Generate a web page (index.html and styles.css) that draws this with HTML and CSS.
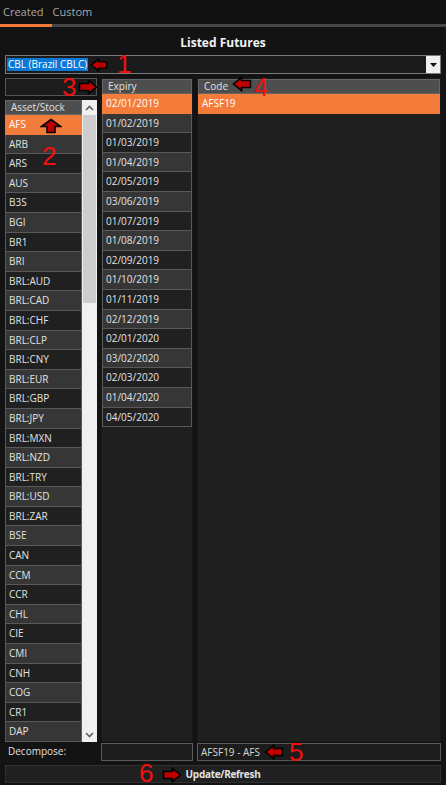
FILE: index.html
```html
<!DOCTYPE html>
<html>
<head>
<meta charset="utf-8">
<link rel="stylesheet" href="styles.css">
</head>
<body>
<div class="tabs"><span class="tab">Created</span><span class="tab">Custom</span></div>
<div class="tabline"><div class="tabline-active"></div></div>
<div class="title">Listed Futures</div>
<div class="combo">
  <span class="combo-text">CBL (Brazil CBLC)</span>
  <span class="combo-btn"><svg width="7" height="4" viewBox="0 0 7 4"><polygon points="0,0 7,0 3.5,4" fill="#111"/></svg></span>
</div>
<div class="grid">
  <div class="col-asset">
    <div class="filter"></div>
    <div class="asset-list">
      <div class="asset-rows">
        <div class="header">Asset/Stock</div>
        <div class="row sel">AFS</div>
        <div class="row light">ARB</div>
        <div class="row">ARS</div>
        <div class="row light">AUS</div>
        <div class="row">B3S</div>
        <div class="row light">BGI</div>
        <div class="row">BR1</div>
        <div class="row light">BRI</div>
        <div class="row">BRL:AUD</div>
        <div class="row light">BRL:CAD</div>
        <div class="row">BRL:CHF</div>
        <div class="row light">BRL:CLP</div>
        <div class="row">BRL:CNY</div>
        <div class="row light">BRL:EUR</div>
        <div class="row">BRL:GBP</div>
        <div class="row light">BRL:JPY</div>
        <div class="row">BRL:MXN</div>
        <div class="row light">BRL:NZD</div>
        <div class="row">BRL:TRY</div>
        <div class="row light">BRL:USD</div>
        <div class="row">BRL:ZAR</div>
        <div class="row light">BSE</div>
        <div class="row">CAN</div>
        <div class="row light">CCM</div>
        <div class="row">CCR</div>
        <div class="row light">CHL</div>
        <div class="row">CIE</div>
        <div class="row light">CMI</div>
        <div class="row">CNH</div>
        <div class="row light">COG</div>
        <div class="row">CR1</div>
        <div class="row light">DAP</div>
      </div>
      <div class="scrollbar">
        <div class="sb-arrow"><svg width="9" height="6" viewBox="0 0 9 6"><polyline points="1,5 4.5,1.5 8,5" fill="none" stroke="#606060" stroke-width="1.6"/></svg></div>
        <div class="sb-thumb"></div>
        <div class="sb-track"></div>
        <div class="sb-arrow"><svg width="9" height="6" viewBox="0 0 9 6"><polyline points="1,1 4.5,4.5 8,1" fill="none" stroke="#606060" stroke-width="1.6"/></svg></div>
      </div>
    </div>
  </div>
  <div class="panel">
    <div class="header">Expiry</div>
    <div class="row sel">02/01/2019</div>
    <div class="row light">01/02/2019</div>
    <div class="row">01/03/2019</div>
    <div class="row light">01/04/2019</div>
    <div class="row">02/05/2019</div>
    <div class="row light">03/06/2019</div>
    <div class="row">01/07/2019</div>
    <div class="row light">01/08/2019</div>
    <div class="row">02/09/2019</div>
    <div class="row light">01/10/2019</div>
    <div class="row">01/11/2019</div>
    <div class="row light">02/12/2019</div>
    <div class="row">02/01/2020</div>
    <div class="row light">03/02/2020</div>
    <div class="row">02/03/2020</div>
    <div class="row light">01/04/2020</div>
    <div class="row">04/05/2020</div>
  </div>
  <div class="panel">
    <div class="header">Code</div>
    <div class="row sel">AFSF19</div>
  </div>
</div>
<div class="bottom">
  <div class="label">Decompose:</div>
  <div class="input"></div>
  <div class="input">AFSF19 - AFS</div>
</div>
<div class="button">Update/Refresh</div>

<!-- annotations -->
<svg class="arrow a1" width="18" height="16" viewBox="0 0 20 16"><polygon points="1.5,8 9.5,1.5 9.5,4.5 18.5,4.5 18.5,11.5 9.5,11.5 9.5,14.5" /></svg>
<span class="num n1">1</span>
<svg class="arrow a2" width="22" height="16" viewBox="0 0 22 16"><polygon points="11,1.5 20.5,8.5 15,8.5 15,14.5 7,14.5 7,8.5 1.5,8.5" /></svg>
<span class="num n2">2</span>
<span class="num n3">3</span>
<svg class="arrow a3" width="20" height="16" viewBox="0 0 20 16"><polygon points="18.5,8 10.5,1.5 10.5,4.5 1.5,4.5 1.5,11.5 10.5,11.5 10.5,14.5" /></svg>
<svg class="arrow a4" width="20" height="16" viewBox="0 0 20 16"><polygon points="1.5,8 9.5,1.5 9.5,4.5 18.5,4.5 18.5,11.5 9.5,11.5 9.5,14.5" /></svg>
<span class="num n4">4</span>
<svg class="arrow a5" width="20" height="16" viewBox="0 0 20 16"><polygon points="1.5,8 9.5,1.5 9.5,4.5 18.5,4.5 18.5,11.5 9.5,11.5 9.5,14.5" /></svg>
<span class="num n5">5</span>
<span class="num n6">6</span>
<svg class="arrow a6" width="20" height="16" viewBox="0 0 20 16"><polygon points="18.5,8 10.5,1.5 10.5,4.5 1.5,4.5 1.5,11.5 10.5,11.5 10.5,14.5" /></svg>
</body>
</html>
```
FILE: styles.css
```css
* { box-sizing: border-box; }
html, body { margin: 0; padding: 0; }
body {
  width: 446px;
  height: 785px;
  background: #131313;
  font-family: "Open Sans", "Noto Sans", sans-serif;
  font-size: 10px;
  color: #e2e2e2;
  position: relative;
  overflow: hidden;
}
.tabs {
  height: 24px;
  display: flex;
  align-items: center;
  gap: 9px;
  padding-left: 3px;
  padding-bottom: 1px;
  font-size: 11px;
  color: #a8a8a8;
  background: #111;
}
.tabline {
  height: 3px;
  background: #474747;
  display: flex;
}
.tabline-active { width: 52px; background: #f37c3a; }
.title {
  height: 28px;
  padding-top: 3px;
  line-height: 25px;
  text-align: center;
  font-weight: bold;
  font-size: 12px;
  color: #f2f2f2;
}
.combo {
  margin: 0 5px;
  height: 19px;
  border: 1px solid #7a7a7a;
  background: #1b1b1b;
  display: flex;
  align-items: center;
  padding-left: 1px;
}
.combo-text {
  background: #0a78d6;
  color: #fff;
  line-height: 13px;
  padding: 0 1px;
}
.combo-btn {
  margin-left: auto;
  width: 14px;
  height: 17px;
  background: #f0f0f0;
  display: flex;
  align-items: center;
  justify-content: center;
}
.grid {
  margin: 4px 5px 0;
  height: 660px;
  display: grid;
  grid-template-columns: 92px 92px 244px;
  column-gap: 4px;
}
.col-asset {
  display: flex;
  flex-direction: column;
  gap: 4px;
}
.filter {
  height: 18px;
  border: 1px solid #555;
  background: #1c1c1c;
}
.asset-list {
  flex: 1;
  display: flex;
  overflow: hidden;
  background: #1e1e1e;
}
.asset-rows {
  width: 77px;
  overflow: hidden;
}
.header {
  height: 15px;
  line-height: 13px;
  padding-left: 5px;
  background: #4e4e4e;
  border: 1px solid #666;
  color: #e0e0e0;
}
.row {
  height: 19.6px;
  line-height: 18px;
  padding-left: 3px;
  border: 1px solid #595959;
  border-top: none;
  background: #202020;
  white-space: nowrap;
}
.row.light { background: #363636; }
.row.sel { background: #f37c3a; border-color: #f37c3a; color: #fff; }
.scrollbar {
  width: 15px;
  background: #f0f0f0;
  display: flex;
  flex-direction: column;
}
.sb-arrow {
  height: 15px;
  display: flex;
  align-items: center;
  justify-content: center;
}
.sb-thumb {
  height: 188px;
  margin: 0 1px;
  background: #cdcdcd;
}
.sb-track { flex: 1; }
.panel {
  background: #1f1f1f;
  border: 1px solid #191919;
  overflow: hidden;
}
.bottom {
  margin: 5px 5px 0;
  height: 18px;
  display: grid;
  grid-template-columns: 92px 92px 244px;
  column-gap: 4px;
}
.label {
  padding-left: 3px;
  line-height: 16px;
  color: #e0e0e0;
}
.input {
  border: 1px solid #5a5a5a;
  background: #1c1c1c;
  line-height: 16px;
  padding-left: 3px;
  color: #d8d8d8;
}
.button {
  margin: 4px 5px 0;
  height: 18px;
  border: 1px solid #303030;
  background: #202020;
  text-align: center;
  font-weight: bold;
  letter-spacing: -0.3px;
  line-height: 16px;
  color: #e2e2e2;
}
/* annotations overlay */
.arrow { position: absolute; }
.arrow polygon { fill: #c00000; stroke: #000; stroke-width: 1.6; stroke-linejoin: miter; }
.num {
  position: absolute;
  font-family: "Liberation Sans", Arial, sans-serif;
  font-size: 26px;
  line-height: 19px;
  color: #f01010;
}
.a1 { left: 90px; top: 57px; }
.n1 { left: 117px; top: 55px; }
.a2 { left: 40px; top: 118px; }
.n2 { left: 42px; top: 147px; }
.n3 { left: 62px; top: 78px; }
.a3 { left: 78px; top: 79px; }
.a4 { left: 232px; top: 76px; }
.n4 { left: 254px; top: 78px; }
.a5 { left: 264px; top: 744px; }
.n5 { left: 289px; top: 743px; }
.n6 { left: 139px; top: 764px; }
.a6 { left: 162px; top: 767px; }
```
